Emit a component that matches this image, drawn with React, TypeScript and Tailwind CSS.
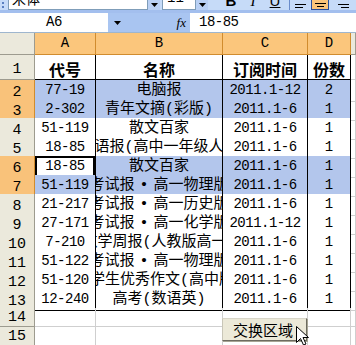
import React from "react";

const MONO = "font-['Liberation_Mono','Noto_Sans_CJK_SC',monospace]";
const CJK = "font-['Noto_Sans_CJK_SC','Liberation_Mono',sans-serif]";

type Row = [string, string, string, string];

const rows: Row[] = [
  ["77-19", "电脑报", "2011.1-12", "2"],
  ["2-302", "青年文摘(彩版)", "2011.1-6", "1"],
  ["51-119", "散文百家", "2011.1-6", "1"],
  ["18-85", "英语报(高中一年级人教", "2011.1-6", "1"],
  ["18-85", "散文百家", "2011.1-6", "1"],
  ["51-119", "考试报•高一物理版", "2011.1-6", "1"],
  ["21-217", "考试报•高一历史版", "2011.1-6", "1"],
  ["27-171", "考试报•高一化学版", "2011.1-12", "1"],
  ["7-210", "数学周报(人教版高一)", "2011.1-6", "1"],
  ["51-122", "考试报•高一物理版", "2011.1-6", "1"],
  ["51-120", "中学生优秀作文(高中版)", "2011.1-6", "1"],
  ["12-240", "高考(数语英)", "2011.1-6", "1"],
];

const selected = [2, 3, 6, 7];
const cols = "grid grid-cols-[35px_61px_127px_85px_43px_1fr]";

function Caret({ className = "" }: { className?: string }) {
  return (
    <svg width="7" height="4" viewBox="0 0 7 4" className={className}>
      <path d="M0 0h7L3.5 4z" fill="#000" />
    </svg>
  );
}

// splits "考试报•高一" so the bullet gets some air on both sides
function Title({ text }: { text: string }) {
  const parts = text.split("•");
  if (parts.length < 2) return <span className="shrink-0">{text}</span>;
  return (
    <span className="shrink-0">
      {parts[0]}
      <span className="mx-[5px]">•</span>
      {parts[1]}
    </span>
  );
}

function Toolbar() {
  return (
    <div className="flex h-[10px] items-end overflow-hidden bg-[#c6dbf8]">
      <div className="ml-[2px] mr-[4px] flex h-[20px] flex-col justify-end gap-[2px] pb-[2px]">
        <span className="h-[2px] w-[2px] bg-[#5a7fc0]" />
        <span className="h-[2px] w-[2px] bg-[#5a7fc0]" />
      </div>
      <div className={`h-[20px] w-[140px] border border-[#7f9db9] bg-white pl-[3px] text-[14px] leading-[14px] ${CJK}`}>宋体</div>
      <div className="flex h-[20px] w-[12px] items-end justify-center bg-[#b9d0f4] pb-[3px]"><Caret /></div>
      <div className={`ml-[2px] h-[20px] w-[34px] border border-[#7f9db9] bg-white pl-[4px] text-[14px] leading-[14px] ${MONO}`}>11</div>
      <div className="flex h-[20px] w-[12px] items-end justify-center bg-[#b9d0f4] pb-[3px]"><Caret /></div>
      <div className="ml-[12px] flex h-[20px] w-[22px] items-end justify-center font-['Liberation_Sans'] text-[15px] font-bold leading-[18px]">B</div>
      <div className="flex h-[20px] w-[22px] items-end justify-center font-['Liberation_Serif'] text-[15px] italic leading-[18px]">I</div>
      <div className="flex h-[20px] w-[22px] items-end justify-center font-['Liberation_Sans'] text-[15px] underline leading-[18px]">U</div>
      <div className="mx-[3px] h-[20px] w-px bg-[#6a8ccb]" />
      <div className="flex h-[20px] w-[16px] flex-col justify-end gap-[2px] pb-[2px] pl-[2px]">
        <span className="h-px w-[11px] bg-black" />
        <span className="h-px w-[8px] bg-black" />
      </div>
      <div className="ml-[2px] flex h-[20px] w-[18px] flex-col items-center justify-end gap-[2px] border border-[#2b4f9b] bg-[#fbc47a] pb-[2px]">
        <span className="h-px w-[11px] bg-black" />
        <span className="h-px w-[7px] bg-black" />
      </div>
      <div className="ml-[4px] flex h-[20px] w-[18px] flex-col items-end justify-end gap-[2px] pb-[2px] pr-[2px]">
        <span className="h-px w-[11px] bg-black" />
        <span className="h-px w-[8px] bg-black" />
      </div>
    </div>
  );
}

function FormulaBar() {
  return (
    <div className="flex h-[20px] border-b border-[#9eb6ce]">
      <div className={`flex w-[108px] items-center justify-center bg-white text-[14px] tracking-[-0.5px] ${MONO}`}>A6</div>
      <div className="flex w-[82px] items-center bg-[#a9c5f1]">
        <Caret className="ml-[6px]" />
        <span className="ml-auto mr-[4px] font-['Liberation_Serif'] text-[13px] italic">fx</span>
      </div>
      <div className={`flex flex-1 items-center bg-white pl-[9px] text-[14px] tracking-[-0.5px] ${MONO}`}>18-85</div>
    </div>
  );
}

function Header() {
  const letters = ["A", "B", "C", "D", ""];
  return (
    <div className={`${cols} h-[22px]`}>
      <div className="border-b border-r border-[#9d9b8f] bg-[#ebe9dc]" />
      {letters.map((l, i) => (
        <div
          key={i}
          className={`flex items-center justify-center border-b border-r text-[14px] ${MONO} ${
            i < 4 ? "border-[#d18c2e] bg-[#fbc67c]" : "border-[#9d9b8f] bg-[#ebe9dc]"
          }`}
        >
          {l}
        </div>
      ))}
    </div>
  );
}

function RowHead({ n, tall = false }: { n: number; tall?: boolean }) {
  const sel = selected.includes(n);
  return (
    <div
      className={`flex items-end justify-center border-b border-r text-[15px] leading-[17px] ${MONO} ${
        sel ? "border-[#d18c2e] bg-[#f9c27a]" : "border-[#9d9b8f] bg-[#ebe9dc]"
      } ${tall ? "pb-[1px]" : ""}`}
    >
      {n}
    </div>
  );
}

export default function App() {
  return (
    <div className="relative h-[345px] w-[356px] overflow-hidden bg-white text-black">
      <Toolbar />
      <div className="h-[3px] bg-[#a3bfee]" />
      <FormulaBar />
      <Header />

      {/* row 1: bold titles */}
      <div className={`${cols} h-[25px]`}>
        <RowHead n={1} tall />
        {["代号", "名称", "订阅时间", "份数"].map((t) => (
          <div key={t} className={`flex items-end justify-center border-b border-r border-black text-[16px] font-bold leading-[20px] ${CJK}`}>
            {t}
          </div>
        ))}
        <div className="border-b border-r border-[#cfcfcf]" />
      </div>

      {rows.map((r, i) => {
        const n = i + 2;
        const sel = selected.includes(n);
        const bg = sel ? "bg-[#b3c6ec]" : "bg-white";
        return (
          <div key={n} className={`${cols} h-[19px]`}>
            <RowHead n={n} />
            <div
              className={`flex items-center justify-center border-b border-r border-black text-[14px] tracking-[-0.5px] ${MONO} ${
                n === 6 ? "bg-white ring-2 ring-inset ring-black" : bg
              }`}
            >
              {r[0]}
            </div>
            <div className={`flex items-center justify-center overflow-hidden whitespace-nowrap border-b border-r border-black text-[15px] leading-[18px] ${MONO} ${bg}`}>
              <Title text={r[1]} />
            </div>
            <div className={`flex items-center justify-center border-b border-r border-black text-[14px] tracking-[-0.5px] ${MONO} ${bg}`}>
              {r[2]}
            </div>
            <div className={`flex items-center justify-center border-b border-r border-black text-[14px] ${MONO} ${bg}`}>
              {r[3]}
            </div>
            <div className="border-b border-r border-[#cfcfcf]" />
          </div>
        );
      })}

      {[14, 15].map((n) => (
        <div key={n} className={`${cols} h-[19px]`}>
          <RowHead n={n} />
          {[0, 1, 2, 3, 4].map((c) => (
            <div key={c} className="border-b border-r border-[#cfcfcf]" />
          ))}
        </div>
      ))}

      {/* floating button from the sheet */}
      <div className="absolute left-[222px] top-[318px] flex h-[23px] w-[85px] items-center border-b border-l border-r border-t border-b-[#6d6b60] border-l-[#c9c6b8] border-r-[#6d6b60] border-t-[#d8d6c9] bg-[#ece9d8] pl-[10px] shadow-[1px_1px_0_#a7a594]">
        <span className={`text-[15px] leading-[18px] ${CJK}`}>交换区域</span>
      </div>

      {/* mouse pointer */}
      <svg className="absolute left-[296px] top-[326px]" width="13" height="20" viewBox="0 0 13 20">
        <path d="M0.5 0.5v16l4-4 3 6.5 2.5-1-3-6.5h5.5z" fill="#fff" stroke="#000" strokeWidth="1" strokeLinejoin="miter" />
      </svg>
    </div>
  );
}
